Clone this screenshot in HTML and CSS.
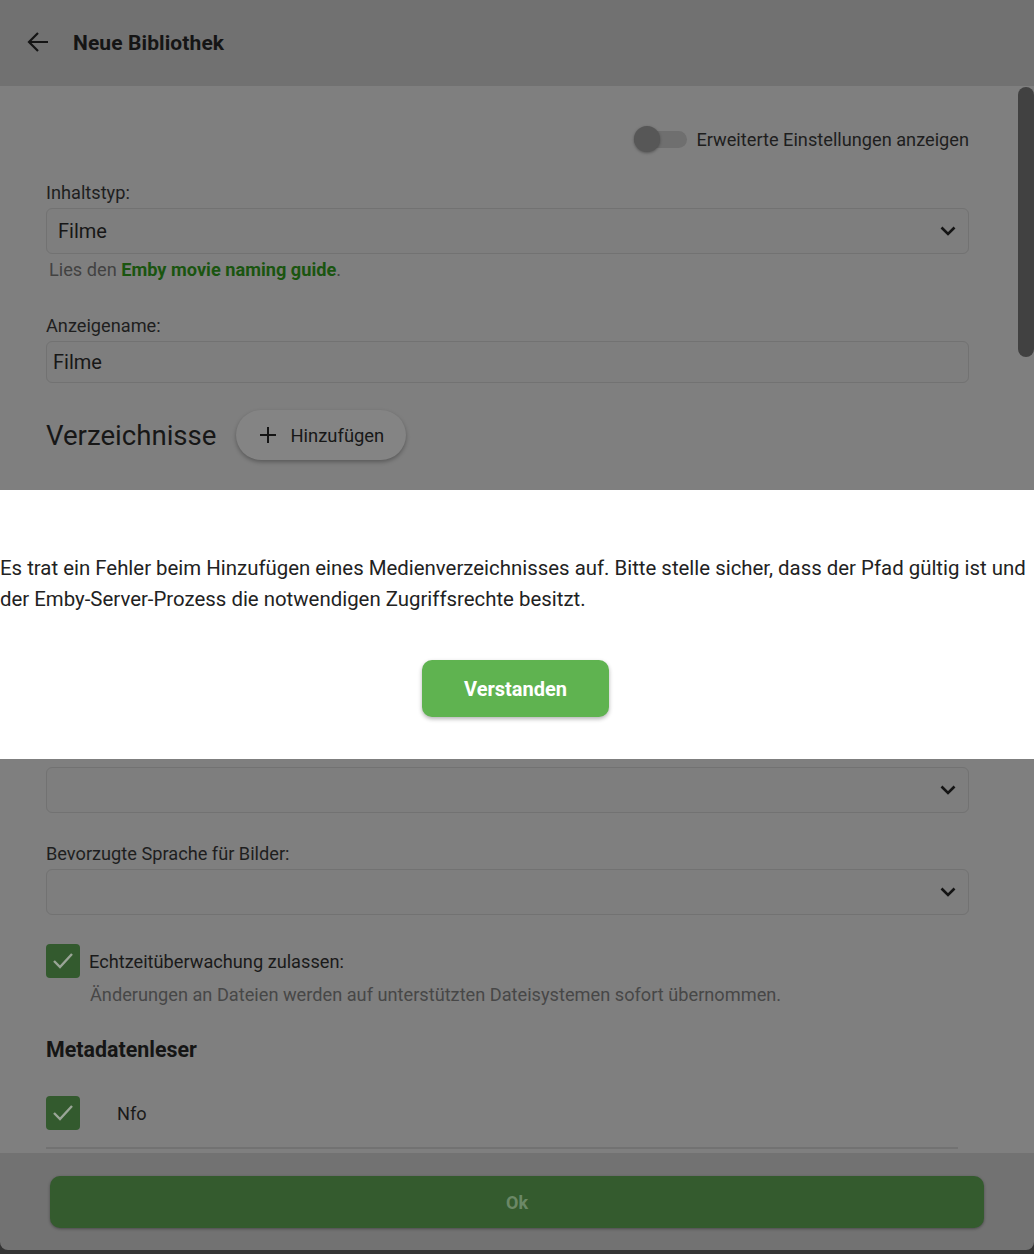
FILE: index.html
```html
<!DOCTYPE html>
<html lang="de">
<head>
<meta charset="utf-8">
<title>Neue Bibliothek</title>
<link rel="stylesheet" href="styles.css">
</head>
<body>
<header class="topbar">
  <button class="back" aria-label="Zurück">
    <svg width="24" height="22" viewBox="0 0 24 22"><path d="M22 11H3M12 2L3 11l9 9" fill="none" stroke="#141414" stroke-width="2.2"/></svg>
  </button>
  <h1 class="title">Neue Bibliothek</h1>
</header>

<main class="content">
  <div class="toggle-row">
    <span class="switch"><span class="track"></span><span class="thumb"></span></span>
    <span class="toggle-label">Erweiterte Einstellungen anzeigen</span>
  </div>

  <div class="field first">
    <div class="label">Inhaltstyp:</div>
    <div class="select tall"><span class="value">Filme</span><svg class="chev" width="16" height="10" viewBox="0 0 16 10"><path d="M1.5 1.5L8 8l6.5-6.5" fill="none" stroke="#141414" stroke-width="2.6"/></svg></div>
    <div class="help">Lies den <a class="link">Emby movie naming guide</a>.</div>
  </div>

  <div class="field name-field">
    <div class="label">Anzeigename:</div>
    <div class="input"><span class="value">Filme</span></div>
  </div>

  <div class="section-row">
    <h2 class="section-title">Verzeichnisse</h2>
    <button class="add-btn"><svg width="16" height="16" viewBox="0 0 16 16"><path d="M8 0v16M0 8h16" stroke="#141414" stroke-width="2"/></svg><span>Hinzufügen</span></button>
  </div>

  <div class="covered">
    <h2 class="sub-title">Bibliothekseinstellungen</h2>
    <div class="field">
      <div class="label">Land der Metadaten:</div>
      <div class="select tall"><span class="value"></span></div>
    </div>
    <div class="field">
      <div class="label">Bevorzugte Sprache für Metadaten:</div>
    </div>
  </div>
  <div class="select tall"><span class="value"></span><svg class="chev" width="16" height="10" viewBox="0 0 16 10"><path d="M1.5 1.5L8 8l6.5-6.5" fill="none" stroke="#141414" stroke-width="2.6"/></svg></div>

  <div class="field">
    <div class="label">Bevorzugte Sprache für Bilder:</div>
    <div class="select tall"><span class="value"></span><svg class="chev" width="16" height="10" viewBox="0 0 16 10"><path d="M1.5 1.5L8 8l6.5-6.5" fill="none" stroke="#141414" stroke-width="2.6"/></svg></div>
  </div>

  <div class="check-field">
    <div class="check-row">
      <span class="checkbox"><svg width="22" height="18" viewBox="0 0 22 18"><path d="M2 9l6 6L20 2" fill="none" stroke="#9aa597" stroke-width="2.4"/></svg></span>
      <span class="check-label">Echtzeitüberwachung zulassen:</span>
    </div>
    <div class="check-desc">Änderungen an Dateien werden auf unterstützten Dateisystemen sofort übernommen.</div>
  </div>

  <h3 class="group-title">Metadatenleser</h3>

  <div class="list-item">
    <span class="checkbox"><svg width="22" height="18" viewBox="0 0 22 18"><path d="M2 9l6 6L20 2" fill="none" stroke="#9aa597" stroke-width="2.4"/></svg></span>
    <span class="list-label">Nfo</span>
  </div>
  <div class="list-note">Wähle die Metadatenleser aus und ordne sie nach Priorität. Die ersten gefundenen Daten werden verwendet.</div>
</main>

<div class="scroll-thumb"></div>

<section class="dialog" role="alertdialog">
  <p class="dialog-text">Es trat ein Fehler beim Hinzufügen eines Medienverzeichnisses auf. Bitte stelle sicher, dass der Pfad gültig ist und der Emby-Server-Prozess die notwendigen Zugriffsrechte besitzt.</p>
  <div class="dialog-actions"><button class="ok-dialog">Verstanden</button></div>
</section>

<footer class="footer">
  <div class="footer-bar"><button class="ok-btn">Ok</button></div>
</footer>
</body>
</html>
```

FILE: styles.css
```css
html, body {
  margin: 0;
  padding: 0;
  overflow: hidden;
  height: 100%;
}
body {
  background: #7f7f7f;
  font-family: Roboto, "Liberation Sans", sans-serif;
  color: #1a1a1a;
}
button {
  font-family: inherit;
  border: none;
  cursor: pointer;
}

.topbar {
  height: 86px;
  background: #717171;
  display: flex;
  align-items: center;
  padding-left: 25px;
}
.back {
  background: none;
  padding: 0;
  width: 26px;
  height: 26px;
  display: flex;
  align-items: center;
  justify-content: center;
  margin-top: -2px;
}
.title {
  margin: 0 0 0 22px;
  font-size: 21px;
  font-weight: 700;
  color: #151515;
  letter-spacing: 0.1px;
}

.content {
  padding: 39px 65px 0 46px;
}

.toggle-row {
  display: flex;
  justify-content: flex-end;
  align-items: center;
  height: 28px;
}
.switch {
  position: relative;
  width: 54px;
  height: 26px;
  display: flex;
  align-items: center;
}
.track {
  display: block;
  width: 53px;
  height: 17px;
  border-radius: 9px;
  background: #6f6f6f;
}
.thumb {
  position: absolute;
  left: 0;
  top: 0;
  width: 26px;
  height: 26px;
  border-radius: 50%;
  background: #575757;
  box-shadow: 0 1px 3px rgba(0,0,0,0.35);
}
.toggle-label {
  margin-left: 8px;
  font-size: 18.2px;
  color: #1e1e1e;
}

.field { margin-top: 30px; }
.field.first { margin-top: 29px; }
.field.name-field { margin-top: 34px; }
.label {
  font-size: 18.2px;
  line-height: 22px;
  color: #1e1e1e;
  margin-bottom: 4px;
}
.select, .input {
  box-sizing: border-box;
  border: 1px solid #727272;
  border-radius: 6px;
  background: #7e7e7e;
  display: flex;
  align-items: center;
}
.select.tall { height: 46px; padding: 0 12px 0 11px; justify-content: space-between; }
.input { height: 42px; padding: 0 6px; margin-top: 1px; }
.value { font-size: 20px; color: #171717; }
.chev { flex: none; }
.help {
  margin-top: 5px;
  padding-left: 3px;
  font-size: 18.2px;
  line-height: 22px;
  color: #424242;
}
.link { color: #1a5510; font-weight: 700; text-decoration: none; }

.section-row {
  display: flex;
  align-items: center;
  margin-top: 27px;
  height: 50px;
}
.section-title {
  margin: 0;
  font-size: 27.6px;
  font-weight: 400;
  color: #171717;
}
.add-btn {
  margin-left: 20px;
  height: 50px;
  padding: 0 22px 0 24px;
  border-radius: 25px;
  background: #848484;
  box-shadow: 0 2px 4px rgba(0,0,0,0.3);
  display: flex;
  align-items: center;
  gap: 14px;
  font-size: 18.4px;
  color: #171717;
}

.covered { visibility: hidden; }
.sub-title {
  margin: 120px 0 0;
  font-size: 22px;
  font-weight: 400;
  height: 29px;
}

.check-field { margin-top: 29px; }
.check-row { display: flex; align-items: center; }
.checkbox {
  box-sizing: border-box;
  width: 34px;
  height: 34px;
  border-radius: 4px;
  background: #335a2e;
  display: flex;
  align-items: center;
  justify-content: center;
  flex: none;
}
.check-label {
  margin-left: 9px;
  font-size: 18.2px;
  color: #1a1a1a;
}
.check-desc {
  margin-top: 6px;
  padding-left: 44px;
  font-size: 18.2px;
  line-height: 22px;
  color: #474747;
}

.group-title {
  margin: 31px 0 0;
  font-size: 21.4px;
  font-weight: 700;
  line-height: 26px;
  color: #151515;
}

.list-item {
  margin-top: 33px;
  display: flex;
  align-items: center;
  width: 912px;
  padding-bottom: 17px;
  border-bottom: 2px solid #727272;
}
.list-label {
  margin-left: 37px;
  font-size: 18.2px;
  color: #1a1a1a;
}
.list-note {
  margin-top: 4px;
  font-size: 18px;
  color: #474747;
}

.scroll-thumb {
  position: fixed;
  top: 87px;
  right: 0;
  width: 16px;
  height: 270px;
  border-radius: 8px;
  background: #414141;
}

.dialog {
  position: fixed;
  top: 490px;
  left: 0;
  right: 0;
  height: 269px;
  box-sizing: border-box;
  background: #ffffff;
  padding-top: 63px;
}
.dialog-text {
  margin: 0;
  font-size: 20.4px;
  line-height: 31px;
  color: #222222;
}
.dialog-actions {
  display: flex;
  justify-content: center;
  margin-top: 45px;
  padding-right: 3px;
}
.ok-dialog {
  width: 187px;
  height: 57px;
  border-radius: 10px;
  background: #5fb350;
  color: #ffffff;
  font-size: 20px;
  font-weight: 700;
  box-shadow: 0 2px 4px rgba(0,0,0,0.3);
}

.footer {
  position: fixed;
  left: 0;
  right: 0;
  bottom: 0;
  height: 101px;
  background: #343434;
}
.footer-bar {
  height: 97px;
  background: #727272;
  border-radius: 0 0 8px 8px;
  box-sizing: border-box;
  padding: 23px 50px 0;
}
.ok-btn {
  width: 100%;
  height: 52px;
  border-radius: 10px;
  background: #345b2e;
  color: #6b8866;
  font-size: 18px;
  font-weight: 700;
  box-shadow: 0 1px 3px rgba(0,0,0,0.35);
}
```
